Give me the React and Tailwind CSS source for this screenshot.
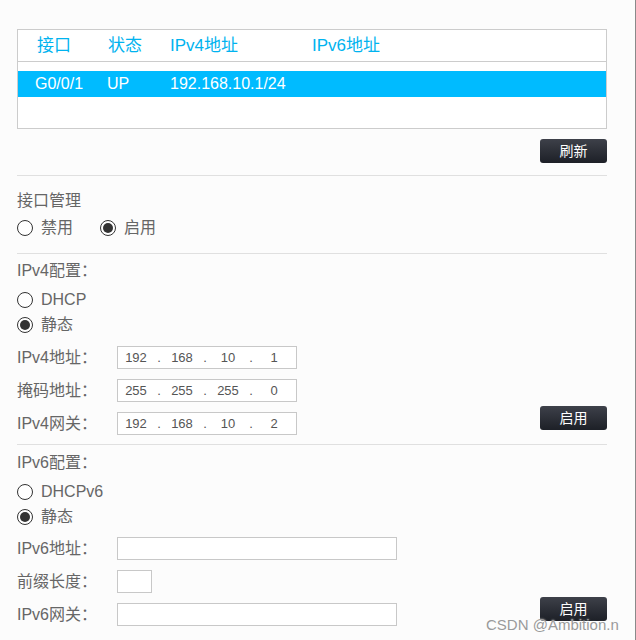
import React, { useState } from 'react';

const font = { fontFamily: '"Liberation Sans", "Noto Sans CJK SC", sans-serif' };

const Radio = ({ checked, label, onClick }) => (
    <label className="flex items-center h-6 cursor-pointer" onClick={onClick}>
        <span className="w-[16px] h-[16px] rounded-full border border-[#333] bg-white flex items-center justify-center">
            {checked && <span className="w-[10px] h-[10px] rounded-full bg-[#333]" />}
        </span>
        <span className="ml-[8px] text-[16px] text-[#666]">{label}</span>
    </label>
);

const DarkButton = ({ children, className = '' }) => (
    <button className={`w-[67px] h-[24px] rounded-[3px] bg-gradient-to-b from-[#3e414a] to-[#1d2027] text-white text-[14px] leading-[24px] ${className}`}>
        {children}
    </button>
);

const IpInput = ({ parts }) => (
    <div className="w-[180px] h-[23px] border border-[#c8c8c8] bg-white flex items-center text-[13px] text-[#555]">
        {parts.map((p, i) => (
            <React.Fragment key={i}>
                {i > 0 && <span className="w-[10px] text-center">.</span>}
                <span className="w-[36px] text-center">{p}</span>
            </React.Fragment>
        ))}
    </div>
);

const Row = ({ label, children }) => (
    <div className="flex items-center h-[23px]">
        <span className="w-[100px] text-[16px] text-[#666]">{label}</span>
        {children}
    </div>
);

const Divider = () => <div className="h-px bg-[#e0e0e0]" />;

const App = () => {
    const [enabled, setEnabled] = useState(true);
    const [v4Mode, setV4Mode] = useState('static');
    const [v6Mode, setV6Mode] = useState('static');

    return (
        <div style={font} className="relative w-[636px] h-[640px] bg-[#fcfcfc] border-r border-[#8a8a8a] overflow-hidden">
            <div className="pl-[17px] pt-[29px] w-[607px]">
                {/* interface table */}
                <div className="h-[100px] border border-[#cccccc] bg-white">
                    <div className="h-[32px] border-b border-[#cccccc] flex items-center pl-[19px] text-[17px] text-[#00b3ef]">
                        <span className="w-[71px]">接口</span>
                        <span className="w-[62px]">状态</span>
                        <span className="w-[142px]">IPv4地址</span>
                        <span>IPv6地址</span>
                    </div>
                    <div className="mt-[9px] h-[26px] bg-[#00bbff] flex items-center pl-[17px] text-[16px] text-white">
                        <span className="w-[72px]">G0/0/1</span>
                        <span className="w-[63px]">UP</span>
                        <span>192.168.10.1/24</span>
                    </div>
                </div>

                <div className="flex justify-end mt-[10px]">
                    <DarkButton>刷新</DarkButton>
                </div>

                <div className="mt-[12px]">
                    <Divider />
                </div>

                {/* interface management */}
                <div className="mt-[13px] h-6 leading-6 text-[16px] text-[#666]">接口管理</div>
                <div className="mt-[3px] flex items-center">
                    <Radio checked={!enabled} label="禁用" onClick={() => setEnabled(false)} />
                    <span className="w-[27px]" />
                    <Radio checked={enabled} label="启用" onClick={() => setEnabled(true)} />
                </div>

                <div className="mt-[13px]">
                    <Divider />
                </div>

                {/* IPv4 */}
                <div className="mt-[5px] h-6 leading-6 text-[16px] text-[#666]">IPv4配置：</div>
                <div className="mt-[5px]">
                    <Radio checked={v4Mode === 'dhcp'} label="DHCP" onClick={() => setV4Mode('dhcp')} />
                </div>
                <div className="mt-[1px]">
                    <Radio checked={v4Mode === 'static'} label="静态" onClick={() => setV4Mode('static')} />
                </div>
                <div className="mt-[9px] flex flex-col gap-[10px]">
                    <Row label="IPv4地址：">
                        <IpInput parts={['192', '168', '10', '1']} />
                    </Row>
                    <Row label="掩码地址：">
                        <IpInput parts={['255', '255', '255', '0']} />
                    </Row>
                    <div className="h-[23px] flex items-start justify-between">
                        <Row label="IPv4网关：">
                            <IpInput parts={['192', '168', '10', '2']} />
                        </Row>
                        <DarkButton className="-mt-[6px]">启用</DarkButton>
                    </div>
                </div>

                <div className="mt-[9px]">
                    <Divider />
                </div>

                {/* IPv6 */}
                <div className="mt-[6px] h-6 leading-6 text-[16px] text-[#666]">IPv6配置：</div>
                <div className="mt-[5px]">
                    <Radio checked={v6Mode === 'dhcp'} label="DHCPv6" onClick={() => setV6Mode('dhcp')} />
                </div>
                <div className="mt-[1px]">
                    <Radio checked={v6Mode === 'static'} label="静态" onClick={() => setV6Mode('static')} />
                </div>
                <div className="mt-[8px] flex flex-col gap-[10px]">
                    <Row label="IPv6地址：">
                        <input className="w-[280px] h-[23px] border border-[#c8c8c8] bg-white outline-none" />
                    </Row>
                    <Row label="前缀长度：">
                        <input className="w-[35px] h-[23px] border border-[#c8c8c8] bg-white outline-none" />
                    </Row>
                    <div className="h-[23px] flex items-start justify-between">
                        <Row label="IPv6网关：">
                            <input className="w-[280px] h-[23px] border border-[#c8c8c8] bg-white outline-none" />
                        </Row>
                        <DarkButton className="-mt-[6px]">启用</DarkButton>
                    </div>
                </div>
            </div>

            <div className="absolute left-[486px] top-[614px] text-[15px] text-[#9a9a9a] [text-shadow:0_0_2px_#ffffff]">
                CSDN @Ambition.n
            </div>
        </div>
    );
};

export default App;
